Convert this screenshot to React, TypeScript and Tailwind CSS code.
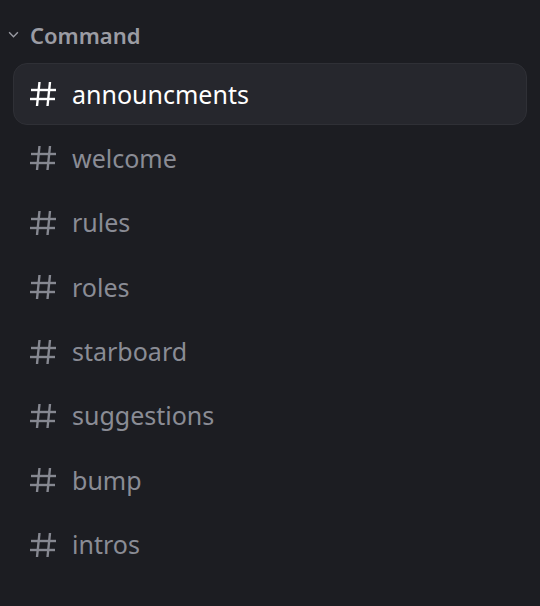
import React from "react";

const channels = [
  "announcments",
  "welcome",
  "rules",
  "roles",
  "starboard",
  "suggestions",
  "bump",
  "intros",
];

function HashIcon({ className }: { className?: string }) {
  return (
    <svg viewBox="0 0 26 26" className={className} fill="none" stroke="currentColor" strokeWidth="2.4" strokeLinecap="butt">
      <path d="M9.5 1 7 25" />
      <path d="M20 1 17.5 25" />
      <path d="M1 9h25" />
      <path d="M0 18h25" />
    </svg>
  );
}

export default function App() {
  return (
    <div
      className="w-[540px] h-[606px] bg-[#1c1d22] overflow-hidden"
      style={{ fontFamily: '"Noto Sans", "Open Sans", sans-serif' }}
    >
      <div className="flex items-center gap-[11px] pl-[8px] pt-[20px] h-[49px]">
        <svg viewBox="0 0 12 8" className="w-[11px] h-[7px] text-[#9a9ba3]" fill="none" stroke="currentColor" strokeWidth="1.6">
          <path d="M1 1.5 6 6.5 11 1.5" />
        </svg>
        <span className="text-[22px] font-semibold text-[#9b9ca4] leading-none">Command</span>
      </div>
      <div className="flex flex-col gap-[2.4px] px-[13px] pt-[14px]">
        {channels.map((name, i) => {
          const active = i === 0;
          return (
            <div
              key={name}
              className={
                active
                  ? "flex items-center h-[62px] rounded-[14px] bg-[#26272d] border border-[#2f3036] pl-[16px]"
                  : "flex items-center h-[62px] rounded-[14px] border border-transparent pl-[16px]"
              }
            >
              <HashIcon className={active ? "w-[26px] h-[26px] text-white" : "w-[26px] h-[26px] text-[#868891]"} />
              <span
                className={
                  active
                    ? "ml-[16px] text-[25px] text-white leading-none"
                    : "ml-[16px] text-[25px] text-[#8a8c95] leading-none"
                }
              >
                {name}
              </span>
            </div>
          );
        })}
      </div>
    </div>
  );
}
